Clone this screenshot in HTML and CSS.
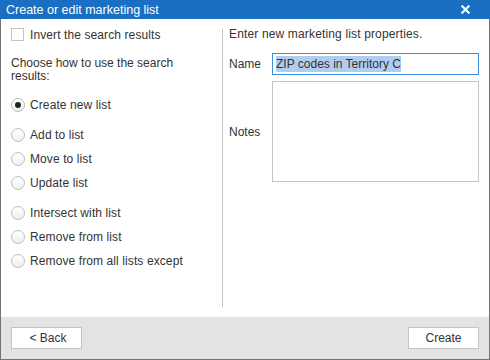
FILE: index.html
```html
<!DOCTYPE html>
<html>

<head>
  <meta charset="UTF-8" />
  <title>Create or edit marketing list</title>
  <link rel="stylesheet" href="styles.css">
</head>

<body>
  <div class="dialog">
    <div class="titlebar">
      <span class="title">Create or edit marketing list</span>
      <svg class="close" viewBox="0 0 10 10" fill="none" stroke="white" stroke-width="2.4" stroke-linecap="square">
        <line x1="1.5" y1="1.5" x2="8.5" y2="8.5"></line>
        <line x1="8.5" y1="1.5" x2="1.5" y2="8.5"></line>
      </svg>
    </div>

    <div class="content">
      <div class="left">
        <label class="option check-row">
          <span class="checkbox"></span>
          Invert the search results
        </label>

        <p class="hint">Choose how to use the search results:</p>

        <div class="radio-group">
          <label class="option"><span class="radio checked"></span>Create new list</label>
        </div>

        <div class="radio-group">
          <label class="option"><span class="radio"></span>Add to list</label>
          <label class="option"><span class="radio"></span>Move to list</label>
          <label class="option"><span class="radio"></span>Update list</label>
        </div>

        <div class="radio-group">
          <label class="option"><span class="radio"></span>Intersect with list</label>
          <label class="option"><span class="radio"></span>Remove from list</label>
          <label class="option"><span class="radio"></span>Remove from all lists except</label>
        </div>
      </div>

      <div class="divider"></div>

      <div class="right">
        <p class="intro">Enter new marketing list properties.</p>

        <div class="field name-field">
          <span class="field-label">Name</span>
          <div class="input"><span class="selected">ZIP codes in Territory C</span></div>
        </div>

        <div class="field">
          <span class="field-label">Notes</span>
          <div class="textarea"></div>
        </div>
      </div>
    </div>

    <div class="footer">
      <button class="btn back">&lt; Back</button>
      <button class="btn">Create</button>
    </div>
  </div>
</body>

</html>
```

FILE: styles.css
```css
body {
  margin: 0;
  font-family: "Liberation Sans", Arial, sans-serif;
  font-size: 12px;
  color: #333;
  background-color: #fff;
}

.dialog {
  width: 490px;
  height: 360px;
  box-sizing: border-box;
  border: 1px solid #747474;
  border-top: none;
  display: flex;
  flex-direction: column;
}

.titlebar {
  height: 19px;
  margin: 0 -1px;
  background-color: #1a6fc2;
  color: #fff;
  display: flex;
  align-items: center;
  justify-content: space-between;
  padding: 0 20px 0 6px;
}

.title {
  font-size: 12.5px;
}

.close {
  width: 9px;
  height: 9px;
}

.content {
  flex: 1;
  display: flex;
  padding: 9px 0 10px 10px;
}

.left {
  width: 211px;
  display: flex;
  flex-direction: column;
}

.option {
  display: flex;
  align-items: center;
  gap: 5px;
  height: 24px;
  letter-spacing: 0.1px;
}

.check-row {
  height: 13px;
  gap: 6px;
}

.checkbox {
  width: 11px;
  height: 11px;
  border: 1px solid #c4c4c4;
  background-color: #fff;
}

.radio {
  width: 12px;
  height: 12px;
  border: 1px solid #bdbdbd;
  border-radius: 50%;
  background: linear-gradient(#fff, #f0f0f0);
  display: flex;
  align-items: center;
  justify-content: center;
}

.radio.checked::after {
  content: "";
  width: 6px;
  height: 6px;
  border-radius: 50%;
  background-color: #222;
}

.hint {
  margin: 16px 0 10px;
  line-height: 13px;
  width: 190px;
}

.radio-group {
  display: flex;
  flex-direction: column;
  margin-bottom: 6px;
}

.divider {
  width: 1px;
  margin: 1px 0 0;
  background-color: #c4c4c4;
}

.right {
  flex: 1;
  padding-left: 6px;
  padding-right: 10px;
  display: flex;
  flex-direction: column;
}

.intro {
  margin: 0;
  height: 13px;
  line-height: 13px;
  letter-spacing: 0.15px;
}

.field {
  display: flex;
  align-items: center;
  margin-top: 6px;
}

.name-field {
  margin-top: 12px;
}

.field-label {
  width: 43px;
}

.input {
  flex: 1;
  height: 20px;
  border: 1px solid #3a8ee0;
  display: flex;
  align-items: center;
  padding-left: 3px;
}

.selected {
  background-color: #b0cdf0;
  color: #333;
  line-height: 16px;
}

.textarea {
  flex: 1;
  height: 99px;
  border: 1px solid #c4c4c4;
}

.footer {
  height: 42px;
  background-color: #e3e3e3;
  display: flex;
  justify-content: space-between;
  align-items: center;
  padding: 0 10px;
}

.btn {
  width: 71px;
  height: 22px;
  background-color: #fff;
  border: 1px solid #c4c4c4;
  font-family: inherit;
  font-size: 12px;
  color: #333;
  padding: 0;
}

.back {
  padding-left: 3px;
}
```
